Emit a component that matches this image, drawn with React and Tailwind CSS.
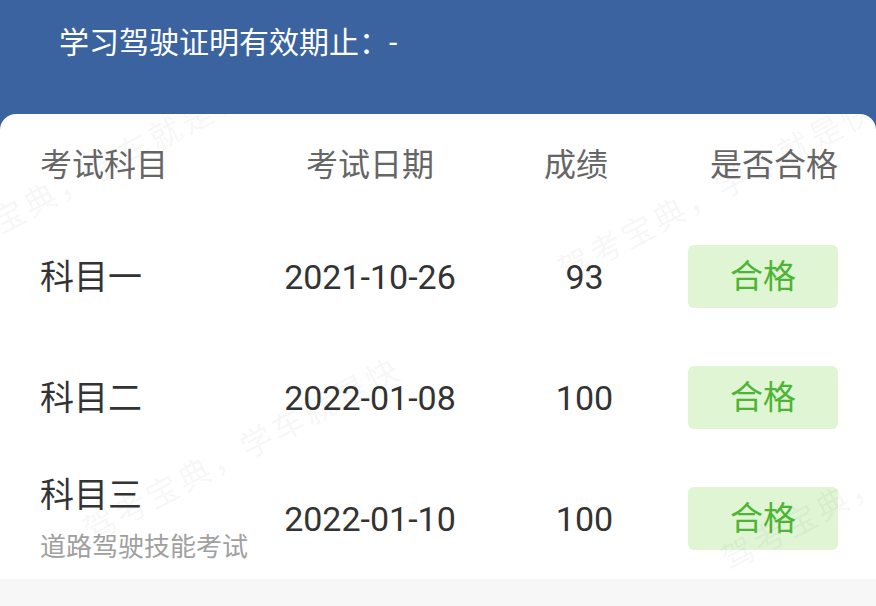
import React from "react";

const rows = [
  { name: "科目一", date: "2021-10-26", score: "93" },
  { name: "科目二", date: "2022-01-08", score: "100" },
  { name: "科目三", sub: "道路驾驶技能考试", date: "2022-01-10", score: "100" },
];

// 水印位置（卡片内坐标，首字中心）
const marks = [
  { x: -54, y: 136 },
  { x: 100, y: 411 },
  { x: 575, y: 151 },
  { x: 738, y: 440 },
];

function Watermark({ x, y }) {
  return (
    <span
      className="absolute origin-left rotate-[-28deg] whitespace-nowrap text-[32px] leading-8 tracking-[3.5px] text-black/[0.055] pointer-events-none select-none"
      style={{ left: x - 14, top: y - 8 }}
    >
      驾考宝典，学车就是快
    </span>
  );
}

export default function App() {
  return (
    <div
      className="w-[876px] min-h-[606px] bg-[#f7f7f7]"
      style={{ fontFamily: 'Roboto, "Noto Sans CJK SC", "Noto Sans", sans-serif' }}
    >
      <div className="h-[130px] bg-[#3a63a0] pl-[59px] pt-[22px]">
        <div className="text-[30px] leading-[42px] text-white">学习驾驶证明有效期止：-</div>
      </div>

      <div className="relative -mt-4 overflow-hidden rounded-t-[16px] bg-white pl-10 pr-[38px]">
        <div className="flex h-[102px] items-center text-[32px] text-[#666]">
          <div className="w-[220px]">考试科目</div>
          <div className="w-[220px] text-center">考试日期</div>
          <div className="w-[192px] text-center">成绩</div>
          <div className="flex flex-1 justify-end">是否合格</div>
        </div>

        {rows.map((r) => (
          <div key={r.name} className="flex h-[121px] items-center text-[34px] text-[#333]">
            {r.sub ? (
              <div className="flex w-[220px] flex-col self-start pt-[17px]">
                <div className="leading-10">{r.name}</div>
                <div className="mt-[17px] text-[26px] leading-[30px] text-[#a0a0a0]">{r.sub}</div>
              </div>
            ) : (
              <div className="w-[220px] leading-10">{r.name}</div>
            )}
            <div className="w-[220px] text-center leading-10">{r.date}</div>
            <div className="w-[192px] pl-[17px] text-center leading-10">{r.score}</div>
            <div className="flex flex-1 justify-end">
              <div className="flex h-[63px] w-[150px] items-center justify-center rounded-[6px] bg-[#dff5d4] text-[33px] text-[#4cb634]">
                合格
              </div>
            </div>
          </div>
        ))}

        {marks.map((m, i) => (
          <Watermark key={i} x={m.x} y={m.y} />
        ))}
      </div>
    </div>
  );
}
